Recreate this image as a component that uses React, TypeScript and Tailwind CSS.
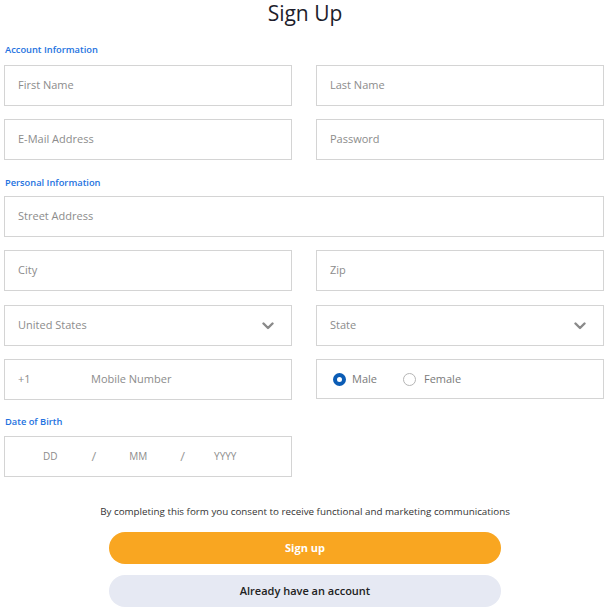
import React from "react";

const font = { fontFamily: '"Open Sans", "Noto Sans", sans-serif' };

function Field({ text, full }: { text: string; full?: boolean }) {
  return (
    <div className={`flex h-[41px] items-center border border-[#d4d4d4] pl-[13px] text-[11px] text-[#8c8c8c] ${full ? "col-span-2" : ""}`}>
      {text}
    </div>
  );
}

function Chevron() {
  return (
    <svg width="12" height="8" viewBox="0 0 12 8" className="mr-[17px]">
      <path d="M1.5 1.5 L6 6 L10.5 1.5" fill="none" stroke="#8a8a8a" strokeWidth="2.4" strokeLinecap="round" strokeLinejoin="round" />
    </svg>
  );
}

function SelectField({ text }: { text: string }) {
  return (
    <div className="flex h-[41px] items-center justify-between border border-[#d4d4d4] pl-[13px] text-[11px] text-[#8c8c8c]">
      <span>{text}</span>
      <Chevron />
    </div>
  );
}

function Label({ text, className }: { text: string; className?: string }) {
  return <div className={`pl-[1px] text-[9.3px] font-semibold text-[#2372e0] ${className ?? ""}`}>{text}</div>;
}

export default function App() {
  return (
    <div className="w-[610px] h-[611px] bg-white" style={font}>
      <h1 className="pt-[1px] text-center text-[21px] leading-[25px] text-[#1d1d2b]">Sign Up</h1>
      <div className="ml-[4px] w-[600px]">
        <Label text="Account Information" className="mt-[19px] leading-[10px]" />
        <div className="mt-[10px] grid grid-cols-2 gap-x-[24px] gap-y-[13px]">
          <Field text="First Name" />
          <Field text="Last Name" />
          <Field text="E-Mail Address" />
          <Field text="Password" />
        </div>
        <Label text="Personal Information" className="mt-[18px] leading-[10px]" />
        <div className="mt-[8px] grid grid-cols-2 gap-x-[24px] gap-y-[13px]">
          <Field text="Street Address" full />
          <Field text="City" />
          <Field text="Zip" />
        </div>
        <div className="mt-[14px] grid grid-cols-2 gap-x-[24px] gap-y-[13px]">
          <SelectField text="United States" />
          <SelectField text="State" />
          <div className="flex h-[41px] items-center border border-[#d4d4d4] pl-[13px] text-[11px] text-[#8c8c8c]">
            <span className="w-[73px]">+1</span>
            <span>Mobile Number</span>
          </div>
          <div className="flex h-[40px] items-center border border-[#d4d4d4] pl-[16px] text-[11px] text-[#7a7a7a]">
            <span className="box-border h-[13px] w-[13px] rounded-full border-[4px] border-[#0b5cb5] bg-white" />
            <span className="ml-[6px]">Male</span>
            <span className="ml-[26px] box-border h-[13px] w-[13px] rounded-full border border-[#b5b5b5] bg-white" />
            <span className="ml-[8px]">Female</span>
          </div>
        </div>
        <Label text="Date of Birth" className="mt-[17px] leading-[10px]" />
        <div className="mt-[9px] grid grid-cols-2 gap-x-[24px]">
          <div className="flex h-[41px] items-center border border-[#d4d4d4] text-[10px] text-[#8c8c8c]">
            <span className="ml-[38px]">DD</span>
            <span className="ml-[34px] text-[13px] text-[#999]">/</span>
            <span className="ml-[33px]">MM</span>
            <span className="ml-[33px] text-[13px] text-[#999]">/</span>
            <span className="ml-[29px]">YYYY</span>
          </div>
        </div>
      </div>
      <p className="mt-[29px] text-center text-[9.8px] leading-[12px] text-[#333]">
        By completing this form you consent to receive functional and marketing communications
      </p>
      <button className="mx-auto mt-[14px] flex h-[32px] w-[392px] items-center justify-center rounded-full bg-[#f9a621] text-[11px] font-bold text-white">
        Sign up
      </button>
      <button className="mx-auto mt-[11px] flex h-[32px] w-[392px] items-center justify-center rounded-full bg-[#e6e9f3] text-[11px] font-semibold text-[#222]">
        Already have an account
      </button>
    </div>
  );
}
